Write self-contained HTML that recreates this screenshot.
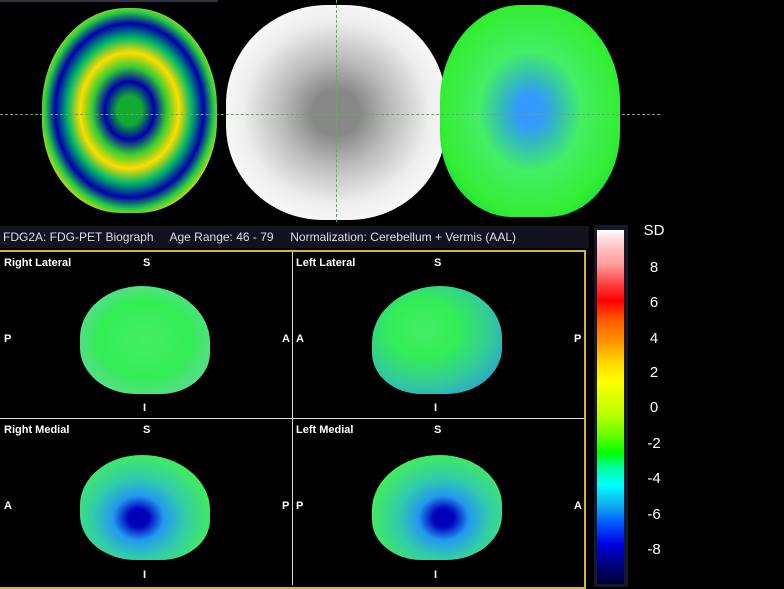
<!DOCTYPE html>
<html><head><style>
body{margin:0;width:784px;height:589px;background:#000;position:relative;overflow:hidden;font-family:"Liberation Sans",sans-serif}
.a{position:absolute}
.t{color:#fff;font-weight:bold;font-size:11px;position:absolute}
.lbl{color:#fff;font-size:15px;position:absolute;left:640px;width:28px;text-align:center;font-family:"Liberation Sans",sans-serif}
</style></head><body>
<!-- top strip -->
<div class="a" style="left:0;top:0;width:218px;height:2px;background:#334"></div>
<div class="a" style="left:42px;top:8px;width:175px;height:205px;border-radius:48% 48% 45% 45%;background:radial-gradient(ellipse at 50% 50%,#1a3 0 10%,#00a 20%,#3c3 30%,#fd0 40%,#0b6 50%,#00a 60%,#2c4 68%,#fd0 76%,#f90 84%,#ff4 89%,#0c4 94%,#004 100%)"></div>
<div class="a" style="left:226px;top:5px;width:220px;height:215px;border-radius:46% 46% 44% 44%;background:radial-gradient(ellipse at 50% 50%,#888 0 15%,#bbb 35%,#eee 60%,#fff 85%,#bbb 100%)"></div>
<div class="a" style="left:440px;top:5px;width:180px;height:212px;border-radius:45% 45% 40% 40%;background:radial-gradient(ellipse at 50% 50%,#39f 0 10%,#3bb 22%,#4e6 40%,#3e3 70%,#0c4 90%,#0a3 100%)"></div>
<div class="a" style="left:0;top:114px;width:660px;border-top:1px dashed #6a6"></div>
<div class="a" style="left:336px;top:0;height:222px;border-left:1px dashed #6a6"></div>
<!-- header -->
<div class="a" style="left:0;top:226px;width:586px;height:22px;background:#12131e;color:#dde;font-size:12px;line-height:22px;padding-left:3px;white-space:pre">FDG2A: FDG-PET Biograph     Age Range: 46 - 79     Normalization: Cerebellum + Vermis (AAL)</div>
<!-- panels -->
<div class="a" style="left:0;top:250px;width:584px;height:335px;border:2px solid #d4b440;border-left:none;box-sizing:content-box"></div>
<div class="a" style="left:292px;top:252px;width:1px;height:333px;background:#ddd"></div>
<div class="a" style="left:0;top:418px;width:584px;height:1px;background:#ddd"></div>
<div class="t" style="left:4px;top:257px">Right Lateral</div><div class="t" style="left:143px;top:257px">S</div>
<div class="t" style="left:296px;top:257px">Left Lateral</div><div class="t" style="left:434px;top:257px">S</div>
<div class="t" style="left:4px;top:424px">Right Medial</div><div class="t" style="left:143px;top:424px">S</div>
<div class="t" style="left:296px;top:424px">Left Medial</div><div class="t" style="left:434px;top:424px">S</div>
<div class="t" style="left:4px;top:333px">P</div><div class="t" style="left:282px;top:333px">A</div>
<div class="t" style="left:296px;top:333px">A</div><div class="t" style="left:574px;top:333px">P</div>
<div class="t" style="left:4px;top:500px">A</div><div class="t" style="left:282px;top:500px">P</div>
<div class="t" style="left:296px;top:500px">P</div><div class="t" style="left:574px;top:500px">A</div>
<div class="t" style="left:143px;top:402px">I</div><div class="t" style="left:434px;top:402px">I</div>
<div class="t" style="left:143px;top:569px">I</div><div class="t" style="left:434px;top:569px">I</div>
<div class="a" style="left:80px;top:286px;width:130px;height:108px;border-radius:50% 55% 40% 45%;background:radial-gradient(ellipse at 50% 50%,#4e6 0,#3e5 50%,#5d8 75%,#3cd 100%)"></div>
<div class="a" style="left:372px;top:286px;width:130px;height:108px;border-radius:55% 50% 45% 40%;background:radial-gradient(ellipse at 40% 40%,#4e6 0,#3e5 30%,#3c9 60%,#28e 100%)"></div>
<div class="a" style="left:80px;top:455px;width:130px;height:105px;border-radius:50% 55% 40% 45%;background:radial-gradient(ellipse at 45% 60%,#00b 0 10%,#29e 25%,#3ca 45%,#4e5 75%,#3c9 100%)"></div>
<div class="a" style="left:372px;top:455px;width:130px;height:105px;border-radius:55% 50% 45% 40%;background:radial-gradient(ellipse at 55% 60%,#00b 0 10%,#29e 25%,#3ca 45%,#4e5 75%,#2ae 100%)"></div>
<!-- colorbar -->
<div class="a" style="left:594px;top:225px;width:34px;height:362px;background:#16182a"></div>
<div class="a" style="left:597px;top:230px;width:27px;height:354px;background:linear-gradient(#fff 0%,#fcc 4%,#f99 10%,#f44 15%,#f00 20%,#f50 25%,#f90 32%,#fd0 38%,#ff0 43%,#bf0 52%,#6f0 58%,#0f0 63%,#0f9 67%,#0ff 72%,#1ae 78%,#05f 83%,#00d 89%,#008 94%,#003 100%)"></div>
<div class="lbl" style="top:222px">SD</div>
<div class="lbl" style="top:259px">8</div>
<div class="lbl" style="top:294px">6</div>
<div class="lbl" style="top:330px">4</div>
<div class="lbl" style="top:364px">2</div>
<div class="lbl" style="top:399px">0</div>
<div class="lbl" style="top:435px">-2</div>
<div class="lbl" style="top:470px">-4</div>
<div class="lbl" style="top:506px">-6</div>
<div class="lbl" style="top:541px">-8</div>
</body></html>
